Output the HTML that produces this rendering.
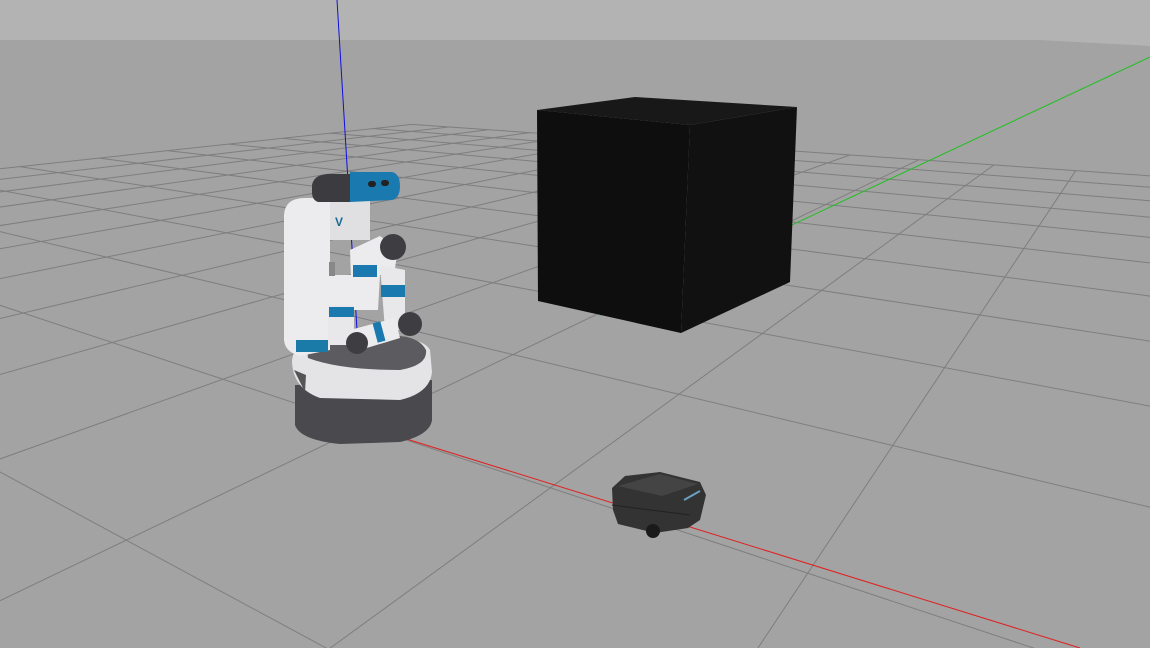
<!DOCTYPE html>
<html><head><style>html,body{margin:0;padding:0;width:1150px;height:648px;overflow:hidden;background:#a4a4a4}</style></head>
<body>
<svg id="s" width="1150" height="648" viewBox="0 0 1150 648" xmlns="http://www.w3.org/2000/svg" style="display:block">
<rect width="1150" height="648" fill="#a3a3a3"/>
<polygon points="0,0 1150,0 1150,46 1040,40 0,40" fill="#b3b3b3"/>
<g id="grid" stroke="#7e7e7e" stroke-width="1" fill="none"></g>
<line x1="337" y1="0" x2="357" y2="330" stroke="#1010e0" stroke-width="1"/>
<line x1="600" y1="315" x2="1150" y2="57" stroke="#20c020" stroke-width="1"/>
<line x1="400" y1="437" x2="1080" y2="648" stroke="#e02020" stroke-width="1"/>
<!-- cube -->
<polygon points="537,110 635,97 797,107 690,125" fill="#181818"/>
<polygon points="537,110 690,125 681,333 538,301" fill="#0e0e0e"/>
<polygon points="690,125 797,107 790,282 681,333" fill="#111"/>
<!-- turtlebot -->
<polygon points="612,488 625,476 660,472 700,482 706,495 700,520 688,528 655,533 618,524 613,510" fill="#333"/>
<polygon points="618,486 660,474 698,484 662,496" fill="#444"/>
<line x1="612" y1="505" x2="690" y2="515" stroke="#222" stroke-width="1"/>
<line x1="684" y1="500" x2="700" y2="491" stroke="#6aa0c0" stroke-width="2"/>
<circle cx="653" cy="531" r="7" fill="#1a1a1a"/>
<!-- robot base -->
<path d="M295,385 L295,425 Q300,440 340,444 L400,442 Q430,435 432,420 L432,380 Z" fill="#4a4a4e"/>
<path d="M292,360 Q292,388 320,398 L400,400 Q430,393 432,372 L430,350 Q425,340 400,338 L320,338 Q295,340 292,360 Z" fill="#e4e4e6"/>
<path d="M294,370 L305,392 L306,375 Z" fill="#555"/>
<path d="M308,358 Q340,370 400,370 Q428,365 426,350 Q420,338 400,336 L330,336 Q305,340 308,358 Z" fill="#5c5c60"/>
<!-- tower -->
<path d="M284,215 Q285,198 305,198 L330,198 L330,350 L300,356 Q285,352 284,340 Z" fill="#ececee"/>
<rect x="296" y="340" width="32" height="12" fill="#1a7aa8"/>
<rect x="330" y="200" width="40" height="40" fill="#e0e0e2"/>
<text x="335" y="226" font-family="Liberation Sans, sans-serif" font-size="12" font-weight="bold" fill="#1a6a98">V</text>
<!-- head -->
<path d="M312,185 Q314,174 330,174 L350,174 L350,202 L318,202 Q312,200 312,192 Z" fill="#3c3c40"/>
<path d="M350,172 L392,172 Q400,174 400,186 Q400,198 392,200 L350,202 Z" fill="#1a7ab0"/>
<rect x="368" y="181" width="8" height="6" rx="3" fill="#222"/><rect x="381" y="180" width="8" height="6" rx="3" fill="#222"/>
<!-- arm -->
<path d="M350,250 L380,236 L398,250 L395,268 L380,275 L378,310 L352,310 Z" fill="#ececee"/>
<circle cx="393" cy="247" r="13" fill="#3e3e42"/>
<rect x="353" y="265" width="24" height="12" fill="#1a7ab0"/>
<path d="M380,265 L405,270 L405,330 L385,330 Z" fill="#e8e8ea"/>
<rect x="381" y="285" width="24" height="12" fill="#1a7ab0"/>
<circle cx="410" cy="324" r="12" fill="#3e3e42"/>
<rect x="325" y="275" width="28" height="35" fill="#ececee"/>
<rect x="328" y="305" width="26" height="40" fill="#e8e8ea"/>
<rect x="329" y="307" width="25" height="10" fill="#1a7ab0"/>
<path d="M350,330 L395,318 L400,338 L360,350 Z" fill="#ececee"/>
<rect x="375" y="322" width="8" height="20" fill="#1a7ab0" transform="rotate(-15 379 332)"/>
<circle cx="357" cy="343" r="11" fill="#3e3e42"/>
<rect x="329" y="262" width="6" height="14" fill="#888"/>
</svg>
<script>
(function(){
var O=[364,426],Vu=[-800,40],Vv=[1160,44],pu=0.138,pv=0.23,N=10;
function P(u,v){var d=1+u*pu+v*pv;return [(O[0]+u*pu*Vu[0]+v*pv*Vv[0])/d,(O[1]+u*pu*Vu[1]+v*pv*Vv[1])/d];}
var g=document.getElementById('grid'),h='';
function seg(a,b){h+='<line x1="'+a[0].toFixed(1)+'" y1="'+a[1].toFixed(1)+'" x2="'+b[0].toFixed(1)+'" y2="'+b[1].toFixed(1)+'"/>';}
for(var k=-N;k<=N;k++){
 var umin=Math.max(-N,(-(1+k*pv)+0.05)/pu);
 if(umin<N) seg(P(umin,k),P(N,k));
 var vmin=Math.max(-N,(-(1+k*pu)+0.05)/pv);
 if(vmin<N) seg(P(k,vmin),P(k,N));
}
g.innerHTML=h;
})();
</script>
</body></html>
